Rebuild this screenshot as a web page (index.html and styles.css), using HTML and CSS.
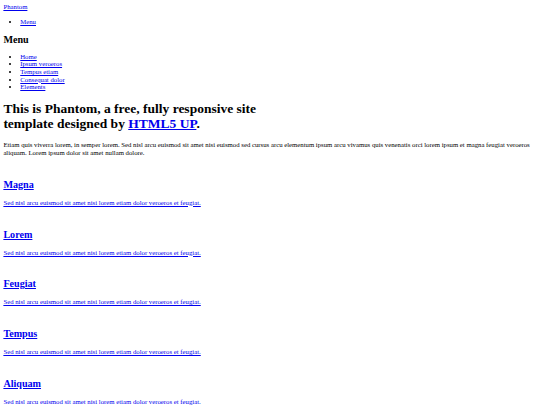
FILE: index.html
```
<!DOCTYPE html>
<html>
<head>
<meta charset="utf-8">
<title>Phantom by HTML5 UP</title>
<link rel="stylesheet" href="styles.css">
</head>
<body class="page">
<div class="wrapper">
  <header class="site-header">
    <a href="#" class="logo">Phantom</a>
    <nav>
      <ul class="list">
        <li><a href="#menu">Menu</a></li>
      </ul>
    </nav>
  </header>
  <nav class="menu">
    <h2 class="menu-title">Menu</h2>
    <ul class="list">
      <li><a href="#">Home</a></li>
      <li><a href="#">Ipsum veroeros</a></li>
      <li><a href="#">Tempus etiam</a></li>
      <li><a href="#">Consequat dolor</a></li>
      <li><a href="#">Elements</a></li>
    </ul>
  </nav>
  <main class="main">
    <header class="intro">
      <h1 class="title">This is Phantom, a free, fully responsive site<br> template designed by <a href="#">HTML5 UP</a>.</h1>
      <p class="text">Etiam quis viverra lorem, in semper lorem. Sed nisl arcu euismod sit amet nisi euismod sed cursus arcu elementum ipsum arcu vivamus quis venenatis orci lorem ipsum et magna feugiat veroeros aliquam. Lorem ipsum dolor sit amet nullam dolore.</p>
    </header>
    <section class="tiles">
      <article class="tile"><a href="#" class="tile-link"><h2 class="tile-title">Magna</h2><p class="text">Sed nisl arcu euismod sit amet nisi lorem etiam dolor veroeros et feugiat.</p></a></article>
      <article class="tile"><a href="#" class="tile-link"><h2 class="tile-title">Lorem</h2><p class="text">Sed nisl arcu euismod sit amet nisi lorem etiam dolor veroeros et feugiat.</p></a></article>
      <article class="tile"><a href="#" class="tile-link"><h2 class="tile-title">Feugiat</h2><p class="text">Sed nisl arcu euismod sit amet nisi lorem etiam dolor veroeros et feugiat.</p></a></article>
      <article class="tile"><a href="#" class="tile-link"><h2 class="tile-title">Tempus</h2><p class="text">Sed nisl arcu euismod sit amet nisi lorem etiam dolor veroeros et feugiat.</p></a></article>
      <article class="tile"><a href="#" class="tile-link"><h2 class="tile-title">Aliquam</h2><p class="text">Sed nisl arcu euismod sit amet nisi lorem etiam dolor veroeros et feugiat.</p></a></article>
    </section>
  </main>
</div>
</body>
</html>
```

FILE: styles.css
```
html { background: #fff; }
.page {
  margin: 3.375px;
  font-family: "Liberation Serif", "Times New Roman", serif;
  font-size: 6.75px;
  line-height: 1.15;
  color: #000;
}
a { color: #0000ee; }
.logo { display: block; }
.list {
  margin: 6.75px 0;
  padding-left: 16.875px;
}
.list li { line-height: 7.6px; }
.menu-title,
.tile-title {
  font-size: 10.125px;
  margin: 8.4px 0;
}
.menu-title { margin-bottom: 7.4px; }
.title {
  font-size: 13.5px;
  margin: 10px 0 9.05px;
}
.text { margin: 6.75px 0; }
.tile { padding-top: 7px; }
.tile-link { display: block; }
```
